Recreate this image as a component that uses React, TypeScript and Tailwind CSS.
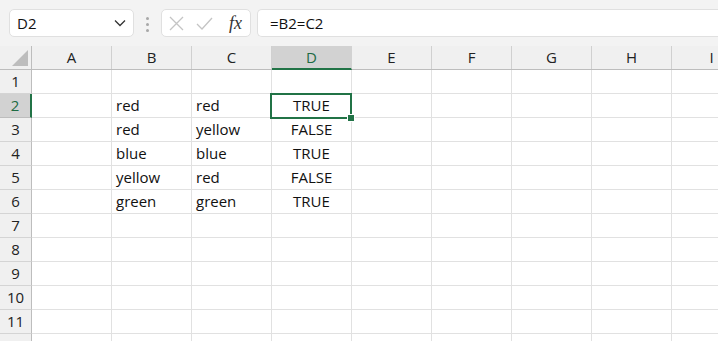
import React from "react";

const cols = ["A", "B", "C", "D", "E", "F", "G", "H", "I"];
const data: Record<number, [string, string, string]> = {
  2: ["red", "red", "TRUE"],
  3: ["red", "yellow", "FALSE"],
  4: ["blue", "blue", "TRUE"],
  5: ["yellow", "red", "FALSE"],
  6: ["green", "green", "TRUE"],
};

const font = { fontFamily: '"Open Sans", "Noto Sans", sans-serif' };

export default function App() {
  const rows = Array.from({ length: 12 }, (_, i) => i + 1);
  return (
    <div className="w-[718px] h-[341px] overflow-hidden bg-white text-[#111]" style={font}>
      {/* toolbar */}
      <div className="h-[46px] bg-[#f3f3f3] flex items-start pt-[9px] pl-[9px]">
        <div className="w-[125px] h-[28px] bg-white border border-[#e0e0e0] rounded-[5px] flex items-center justify-between pl-[7px] pr-[7px]">
          <span className="text-[15px] leading-none">D2</span>
          <svg width="12" height="8" viewBox="0 0 12 8" fill="none" stroke="#333" strokeWidth="1.3">
            <path d="M1 1.5 L6 6.5 L11 1.5" />
          </svg>
        </div>
        <div className="w-[27px] flex flex-col items-center gap-[3px] pt-[8px]">
          <div className="w-[3px] h-[3px] bg-[#a8a8a8] rounded-full" />
          <div className="w-[3px] h-[3px] bg-[#a8a8a8] rounded-full" />
          <div className="w-[3px] h-[3px] bg-[#a8a8a8] rounded-full" />
        </div>
        <div className="w-[90px] h-[28px] bg-white border border-[#e0e0e0] rounded-[5px] flex items-center pl-[7px]">
          <svg width="15" height="15" viewBox="0 0 15 15" stroke="#c4c4c4" strokeWidth="1.3" fill="none">
            <path d="M1 1 L14 14 M14 1 L1 14" />
          </svg>
          <svg className="ml-[12px]" width="17" height="13" viewBox="0 0 17 13" stroke="#c4c4c4" strokeWidth="1.3" fill="none">
            <path d="M1 7 L6 12 L16 1" />
          </svg>
          <span
            className="ml-[16px] text-[18px] leading-none text-[#333] italic"
            style={{ fontFamily: '"Liberation Serif", "DejaVu Serif", serif' }}
          >
            fx
          </span>
        </div>
        <div className="ml-[6px] flex-1 h-[28px] bg-white border border-[#e0e0e0] rounded-l-[5px] border-r-0 flex items-center pl-[12px]">
          <span className="text-[15px] leading-none">=B2=C2</span>
        </div>
      </div>

      {/* header row */}
      <div className="flex h-[24px] bg-[#f0f0f0] border-b border-[#bdbdbd]">
        <div className="w-[32px] shrink-0 border-r border-[#bdbdbd] relative">
          <svg className="absolute right-[3px] bottom-[3px]" width="16" height="16" viewBox="0 0 16 16">
            <path d="M16 0 L16 16 L0 16 Z" fill="#bdbdbd" />
          </svg>
        </div>
        {cols.map((c) => (
          <div
            key={c}
            className={
              c === "D"
                ? "w-[80px] shrink-0 flex items-center justify-center text-[15px] bg-[#d2d2d2] text-[#1d6b43] border-b-2 border-[#217346] border-r border-r-[#d2d2d2] -mb-[1px]"
                : "w-[80px] shrink-0 flex items-center justify-center text-[15px] text-[#222] border-r border-[#d0d0d0]"
            }
          >
            {c}
          </div>
        ))}
      </div>

      {/* rows */}
      {rows.map((r) => (
        <div key={r} className="flex h-[24px]">
          <div
            className={
              r === 2
                ? "w-[32px] shrink-0 bg-[#d2d2d2] border-r-2 border-[#217346] border-b border-b-[#bdbdbd] flex items-center justify-center text-[15px] text-[#1d6b43]"
                : "w-[32px] shrink-0 bg-[#f0f0f0] border-r border-[#bdbdbd] border-b border-b-[#d4d4d4] flex items-center justify-center text-[15px] text-[#222]"
            }
          >
            {r}
          </div>
          {cols.map((c) => {
            const d = data[r];
            let text = "";
            if (d) {
              if (c === "B") text = d[0];
              if (c === "C") text = d[1];
              if (c === "D") text = d[2];
            }
            const selected = r === 2 && c === "D";
            return (
              <div
                key={c}
                className={
                  "w-[80px] shrink-0 border-r border-b border-[#e1e1e1] flex items-center text-[15px] relative " +
                  (c === "D" ? "justify-center" : "justify-start pl-[4px]")
                }
              >
                {text}
                {selected && (
                  <div className="absolute -left-[2px] -top-[1px] w-[82px] h-[26px] border-2 border-[#217346] z-10">
                    <div className="absolute -right-[5px] -bottom-[5px] w-[8px] h-[8px] bg-[#217346] border border-white" />
                  </div>
                )}
              </div>
            );
          })}
        </div>
      ))}
    </div>
  );
}
